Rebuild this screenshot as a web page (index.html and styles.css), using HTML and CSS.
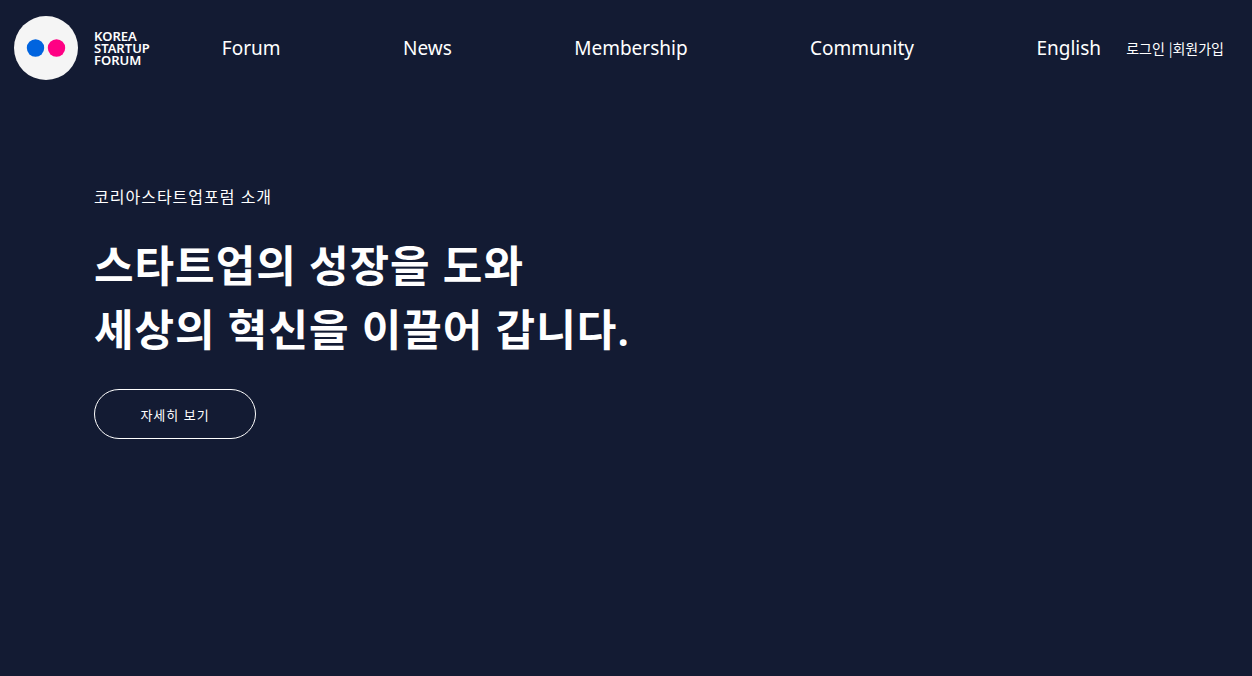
FILE: index.html
```html
<!DOCTYPE html>
<html lang="ko">
<head>
<meta charset="utf-8">
<title>Korea Startup Forum</title>
<link rel="stylesheet" href="styles.css">
</head>
<body>
<header class="header">
  <a class="brand" href="#">
    <svg class="brand-mark" viewBox="0 0 64 64" aria-hidden="true">
      <circle cx="32" cy="32" r="32" fill="#f5f5f5"/>
      <circle cx="21.500" cy="32" r="8.700" fill="#0064df"/>
      <circle cx="42.500" cy="32" r="8.700" fill="#ff0084"/>
    </svg>
    <span class="brand-name">KOREA<br>STARTUP<br>FORUM</span>
  </a>
  <nav class="nav">
    <a href="#">Forum</a>
    <a href="#">News</a>
    <a href="#">Membership</a>
    <a href="#">Community</a>
    <a href="#">English</a>
  </nav>
  <div class="account"><a href="#">로그인</a> |<a href="#">회원가입</a></div>
</header>
<main class="hero">
  <p class="eyebrow">코리아스타트업포럼 소개</p>
  <h1 class="title">스타트업의 성장을 도와<br>세상의 혁신을 이끌어 갑니다.</h1>
  <button class="more" type="button">자세히 보기</button>
</main>
</body>
</html>
```

FILE: styles.css
```css
* {
  box-sizing: border-box;
}

body {
  margin: 0;
  min-height: 100vh;
  background: #131b33;
  color: #fff;
  font-family: "Noto Sans", "Noto Sans CJK KR", sans-serif;
}

a {
  color: inherit;
  text-decoration: none;
}

.header {
  display: flex;
  align-items: center;
  padding: 16px 28px 16px 14px;
}

.brand {
  display: flex;
  align-items: center;
  gap: 16px;
}

.brand-mark {
  width: 64px;
  height: 64px;
}

.brand-name {
  font-size: 13px;
  font-weight: 600;
  line-height: 12px;
}

.nav {
  flex: 1;
  display: flex;
  justify-content: space-between;
  margin: 0 25px 0 72px;
  font-size: 19px;
}

.account {
  font-family: "Noto Sans CJK KR", sans-serif;
  font-size: 14px;
}

.hero {
  padding: 88px 94px;
}

.eyebrow {
  margin: 0;
  font-size: 16px;
  line-height: 26px;
  letter-spacing: 1px;
}

.title {
  margin: 24px 0 27px;
  font-size: 43px;
  font-weight: 600;
  line-height: 64px;
  letter-spacing: 1px;
}

.more {
  width: 162px;
  height: 50px;
  border: 1px solid #fff;
  border-radius: 25px;
  background: transparent;
  color: inherit;
  font-family: inherit;
  font-size: 13px;
  letter-spacing: 1px;
}
```
